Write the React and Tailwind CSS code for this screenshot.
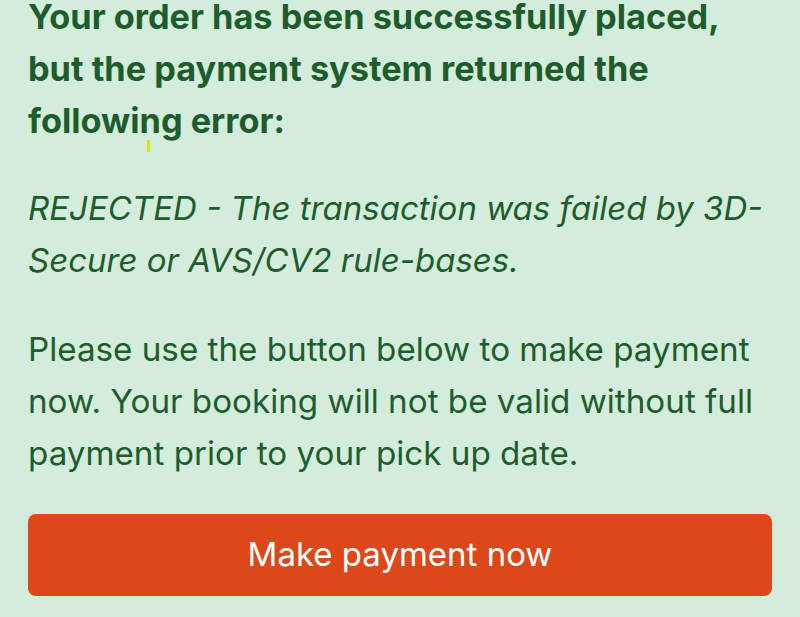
export default function App() {
  return (
    <div
      className="relative w-[800px] h-[617px] overflow-hidden bg-[#d3ecdb] px-[28px] text-[#1e5c2c]"
      style={{ fontFamily: 'Inter, "Liberation Sans", sans-serif' }}
    >
      <h1 className="mt-[-9px] text-[34.3px] leading-[52px] font-bold whitespace-nowrap">
        Your order has been successfully placed,
        <br />
        but the payment system returned the
        <br />
        following error:
      </h1>
      <span className="absolute left-[147px] top-[140px] w-[3px] h-[12px] bg-[#d8e600]" />
      <p className="mt-[35px] text-[33px] leading-[52px] italic whitespace-nowrap">
        REJECTED - The transaction was failed by 3D-
        <br />
        Secure or AVS/CV2 rule-bases.
      </p>
      <p className="mt-[37px] text-[33.2px] leading-[52px] whitespace-nowrap">
        Please use the button below to make payment
        <br />
        now. Your booking will not be valid without full
        <br />
        payment prior to your pick up date.
      </p>
      <button className="mt-[35px] w-full h-[82px] rounded-[8px] bg-[#dc4819] text-white text-[33px] font-normal">
        Make payment now
      </button>
    </div>
  );
}
